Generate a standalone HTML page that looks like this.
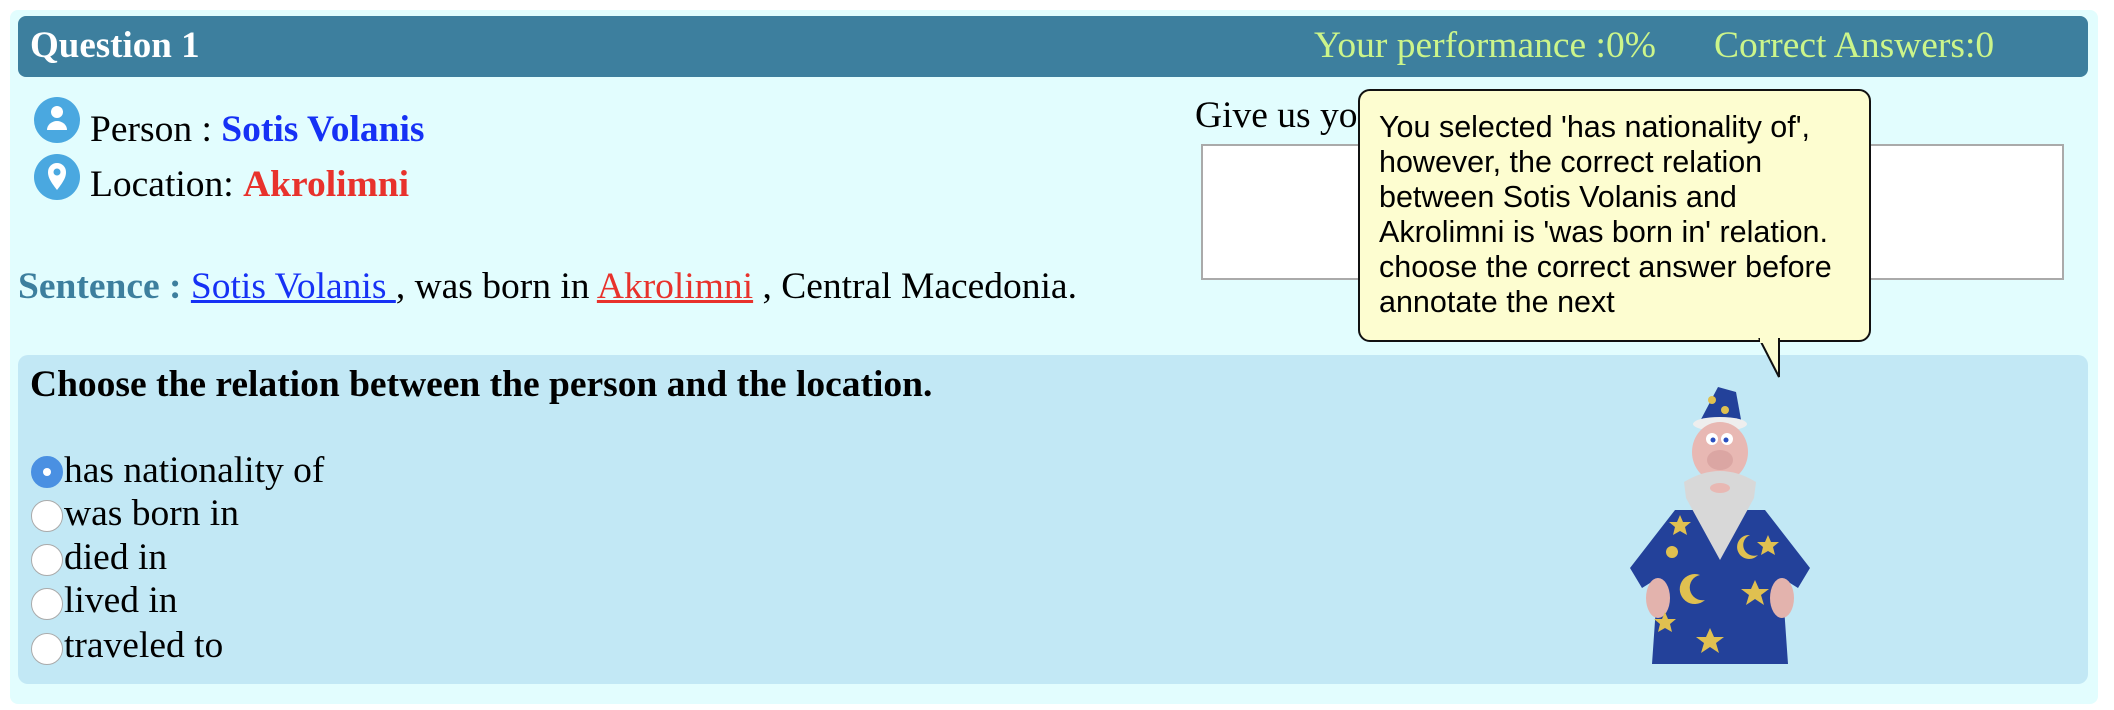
<!DOCTYPE html>
<html><head><meta charset="utf-8"><style>
*{margin:0;padding:0;box-sizing:border-box}
body{width:2114px;height:710px;background:#fff;position:relative;overflow:hidden;font-family:"Liberation Serif",serif;color:#000}
.abs{position:absolute;white-space:nowrap}
#outer{position:absolute;left:10px;top:10px;width:2088px;height:694px;background:#e2fdfe;border-radius:8px}
#hdr{position:absolute;left:18px;top:16px;width:2070px;height:61px;background:#3d7f9e;border-radius:8px}
#panel{position:absolute;left:18px;top:355px;width:2070px;height:329px;background:#c2e8f5;border-radius:10px}
.radio{position:absolute;left:31px;width:32px;height:32px;border-radius:50%;background:#fff;border:1px solid #aaa}
.opt{position:absolute;left:64px;font-size:37.5px;white-space:nowrap}
</style></head><body>
<div id="outer"></div>
<div id="hdr"></div>
<div class="abs" style="left:30px;top:24px;font-size:37px;font-weight:bold;color:#fff">Question 1</div>
<div class="abs" style="left:1314px;top:24px;font-size:37.5px;color:#ccf58a">Your performance :0%</div>
<div class="abs" style="left:1714px;top:24px;font-size:37.5px;color:#ccf58a">Correct Answers:0</div>

<svg class="abs" style="left:34px;top:97px" width="46" height="46" viewBox="0 0 46 46"><circle cx="23" cy="23" r="23" fill="#4aa8e0"/><circle cx="23" cy="15" r="6" fill="#fff"/><path d="M13 33 a10 9 0 0 1 20 0 z" fill="#fff"/></svg>
<div class="abs" style="left:90px;top:108px;font-size:37.5px">Person : <b style="color:#1631f5">Sotis Volanis</b></div>
<svg class="abs" style="left:34px;top:154px" width="46" height="46" viewBox="0 0 46 46"><circle cx="23" cy="23" r="23" fill="#4aa8e0"/><path d="M23 36 C16 27 14 23 14 18 a9 9 0 0 1 18 0 c0 5 -2 9 -9 18z" fill="#fff"/><circle cx="23" cy="18" r="3.5" fill="#4aa8e0"/></svg>
<div class="abs" style="left:90px;top:163px;font-size:37.5px">Location: <b style="color:#e8322c">Akrolimni</b></div>

<div class="abs" style="left:18px;top:265px;font-size:37.5px"><b style="color:#3d7f9e">Sentence : </b><span style="color:#1631f5;text-decoration:underline">Sotis Volanis </span>, was born in <span style="color:#e8322c;text-decoration:underline">Akrolimni</span> , Central Macedonia.</div>

<div class="abs" style="left:1195px;top:94px;font-size:37.5px">Give us your</div>
<div class="abs" style="left:1201px;top:144px;width:863px;height:136px;background:#fff;border:2px solid #aaa"></div>

<div id="panel"></div>
<div class="abs" style="left:30px;top:363px;font-size:37.5px;font-weight:bold">Choose the relation between the person and the location.</div>
<div class="radio" style="top:456px;background:#4a90e2;border-color:#4a90e2"><div style="position:absolute;left:11px;top:11px;width:8px;height:8px;border-radius:50%;background:#fff"></div></div>
<div class="opt" style="top:449px">has nationality of</div>
<div class="radio" style="top:500px"></div><div class="opt" style="top:492px">was born in</div>
<div class="radio" style="top:544px"></div><div class="opt" style="top:536px">died in</div>
<div class="radio" style="top:588px"></div><div class="opt" style="top:579px">lived in</div>
<div class="radio" style="top:633px"></div><div class="opt" style="top:624px">traveled to</div>

<svg class="abs" style="left:1620px;top:370px" width="220" height="310" viewBox="0 0 220 310">
<path d="M55 140 L145 140 L190 198 L178 218 L162 208 L168 294 L32 294 L38 208 L22 218 L10 198 Z" fill="#23419a"/>
<ellipse cx="38" cy="228" rx="12" ry="20" fill="#e3b3ad"/><ellipse cx="162" cy="228" rx="12" ry="20" fill="#e3b3ad"/>
<path d="M78 55 L98 17 L116 22 L122 55 Z" fill="#23419a"/>
<ellipse cx="100" cy="54" rx="27" ry="7" fill="#eee"/>
<ellipse cx="100" cy="82" rx="28" ry="30" fill="#e8b8b3"/>
<circle cx="92" cy="69" r="6" fill="#fff"/><circle cx="107" cy="69" r="6" fill="#fff"/>
<circle cx="93" cy="70" r="2.5" fill="#2a4fc0"/><circle cx="106" cy="70" r="2.5" fill="#2a4fc0"/>
<path d="M64 112 Q100 90 136 112 L134 128 L100 190 L66 128 Z" fill="#d8d8d8"/>
<ellipse cx="100" cy="90" rx="13" ry="10" fill="#dba6a3"/>
<ellipse cx="100" cy="118" rx="10" ry="5" fill="#e8b8b3"/>
<g fill="#e0c050">
<path d="M60 145 l3 7 8 0 -6 5 2 8 -7 -4 -7 4 2 -8 -6 -5 8 0z"/>
<path d="M148 165 l3 7 8 0 -6 5 2 8 -7 -4 -7 4 2 -8 -6 -5 8 0z"/>
<path d="M135 210 l4 9 10 0 -8 6 3 10 -9 -6 -9 6 3 -10 -8 -6 10 0z"/>
<path d="M90 258 l4 9 10 0 -8 6 3 10 -9 -6 -9 6 3 -10 -8 -6 10 0z"/>
<path d="M45 242 l3 7 8 0 -6 5 2 8 -7 -4 -7 4 2 -8 -6 -5 8 0z"/>
<path d="M80 205 a15 15 0 1 0 5 25 a12 12 0 1 1 -5 -25z"/>
<path d="M130 165 a12 12 0 1 0 8 20 a10 10 0 1 1 -8 -20z"/>
<circle cx="52" cy="182" r="6"/><circle cx="92" cy="30" r="4"/><circle cx="105" cy="40" r="4"/>
</g>
</svg>

<div class="abs" style="left:1358px;top:89px;width:513px;height:253px;background:#fdfdd0;border:2px solid #111;border-radius:12px"></div>
<svg class="abs" style="left:1750px;top:338px" width="40" height="42" viewBox="0 0 40 42"><path d="M9 0 L29 39 L29 0" fill="#fdfdd0" stroke="#111" stroke-width="2"/><rect x="10" y="0" width="18" height="5" fill="#fdfdd0"/></svg>
<div class="abs" style="left:1379px;top:110px;font-family:'Liberation Sans',sans-serif;font-size:30.5px;line-height:35px;white-space:nowrap;width:480px">You selected 'has nationality of',<br>however, the correct relation<br>between Sotis Volanis and<br>Akrolimni is 'was born in' relation.<br>choose the correct answer before<br>annotate the next</div>
</body></html>
